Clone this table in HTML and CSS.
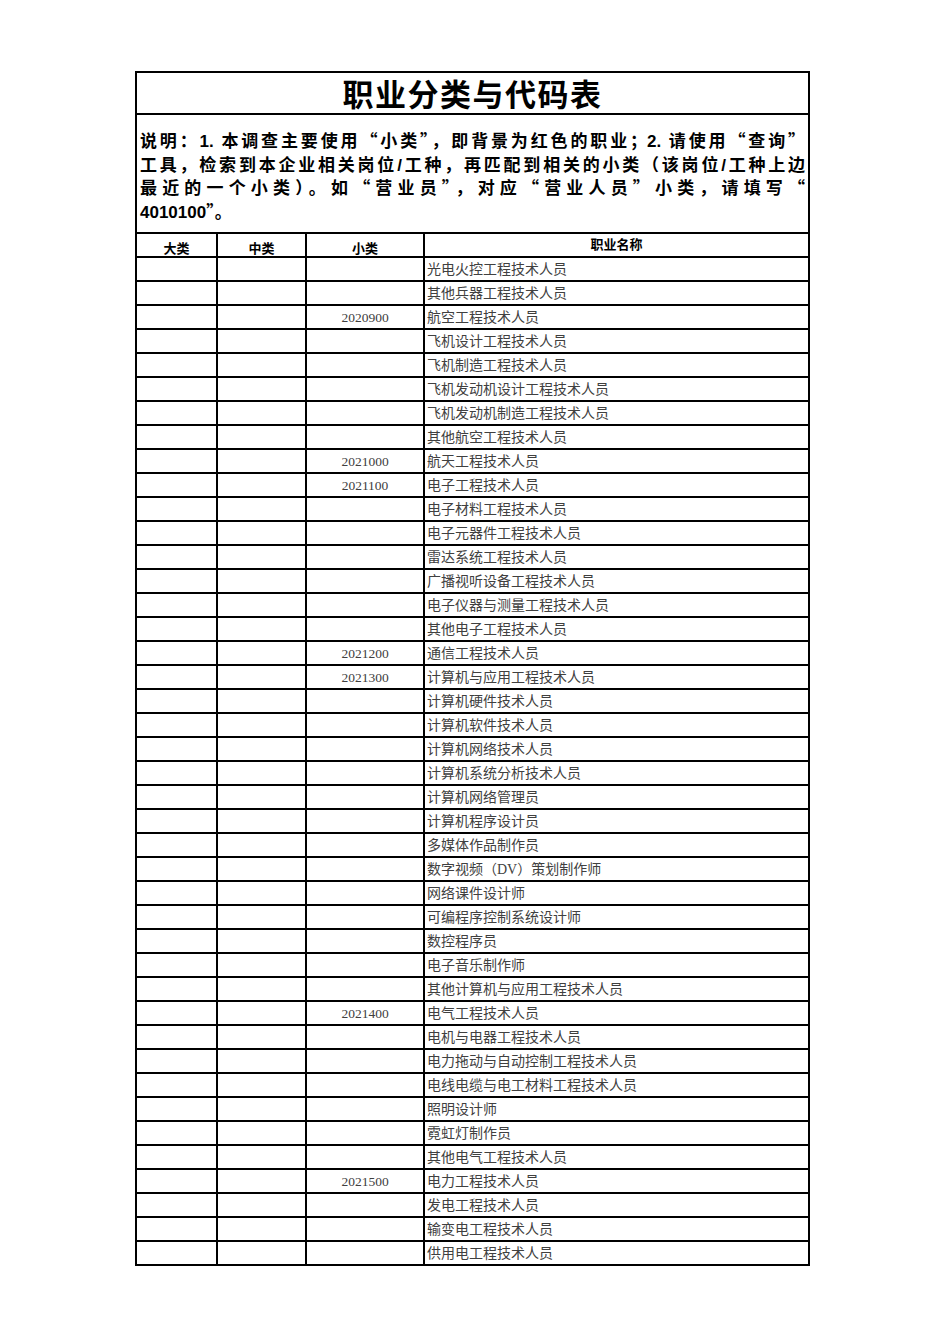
FILE: index.html
```html
<!DOCTYPE html>
<html lang="zh-CN">
<head>
<meta charset="utf-8">
<title>职业分类与代码表</title>
<link rel="stylesheet" href="styles.css">
</head>
<body>
<div class="sheet">
  <div class="title">职业分类与代码表</div>
  <div class="desc">
    <span class="ln jl">说明：<span class="num">1. </span>本调查主要使用“小类”，即背景为红色的职业；<span class="num">2. </span>请使用“查询”</span>
    <span class="ln jl">工具，检索到本企业相关岗位<span class="num">/</span>工种，再匹配到相关的小类（该岗位<span class="num">/</span>工种上边</span>
    <span class="ln jl">最近的一个小类）。如“营业员”，对应“营业人员”小类，请填写“</span>
    <span class="ln"><span class="num">4010100</span>”。</span>
  </div>
  <div class="hd">大类</div><div class="hd">中类</div><div class="hd">小类</div><div class="hd hd-top">职业名称</div>

  <div class="c"></div><div class="c"></div><div class="c code"></div><div class="c name">光电火控工程技术人员</div>
  <div class="c"></div><div class="c"></div><div class="c code"></div><div class="c name">其他兵器工程技术人员</div>
  <div class="c"></div><div class="c"></div><div class="c code">2020900</div><div class="c name">航空工程技术人员</div>
  <div class="c"></div><div class="c"></div><div class="c code"></div><div class="c name">飞机设计工程技术人员</div>
  <div class="c"></div><div class="c"></div><div class="c code"></div><div class="c name">飞机制造工程技术人员</div>
  <div class="c"></div><div class="c"></div><div class="c code"></div><div class="c name">飞机发动机设计工程技术人员</div>
  <div class="c"></div><div class="c"></div><div class="c code"></div><div class="c name">飞机发动机制造工程技术人员</div>
  <div class="c"></div><div class="c"></div><div class="c code"></div><div class="c name">其他航空工程技术人员</div>
  <div class="c"></div><div class="c"></div><div class="c code">2021000</div><div class="c name">航天工程技术人员</div>
  <div class="c"></div><div class="c"></div><div class="c code">2021100</div><div class="c name">电子工程技术人员</div>
  <div class="c"></div><div class="c"></div><div class="c code"></div><div class="c name">电子材料工程技术人员</div>
  <div class="c"></div><div class="c"></div><div class="c code"></div><div class="c name">电子元器件工程技术人员</div>
  <div class="c"></div><div class="c"></div><div class="c code"></div><div class="c name">雷达系统工程技术人员</div>
  <div class="c"></div><div class="c"></div><div class="c code"></div><div class="c name">广播视听设备工程技术人员</div>
  <div class="c"></div><div class="c"></div><div class="c code"></div><div class="c name">电子仪器与测量工程技术人员</div>
  <div class="c"></div><div class="c"></div><div class="c code"></div><div class="c name">其他电子工程技术人员</div>
  <div class="c"></div><div class="c"></div><div class="c code">2021200</div><div class="c name">通信工程技术人员</div>
  <div class="c"></div><div class="c"></div><div class="c code">2021300</div><div class="c name">计算机与应用工程技术人员</div>
  <div class="c"></div><div class="c"></div><div class="c code"></div><div class="c name">计算机硬件技术人员</div>
  <div class="c"></div><div class="c"></div><div class="c code"></div><div class="c name">计算机软件技术人员</div>
  <div class="c"></div><div class="c"></div><div class="c code"></div><div class="c name">计算机网络技术人员</div>
  <div class="c"></div><div class="c"></div><div class="c code"></div><div class="c name">计算机系统分析技术人员</div>
  <div class="c"></div><div class="c"></div><div class="c code"></div><div class="c name">计算机网络管理员</div>
  <div class="c"></div><div class="c"></div><div class="c code"></div><div class="c name">计算机程序设计员</div>
  <div class="c"></div><div class="c"></div><div class="c code"></div><div class="c name">多媒体作品制作员</div>
  <div class="c"></div><div class="c"></div><div class="c code"></div><div class="c name">数字视频（DV）策划制作师</div>
  <div class="c"></div><div class="c"></div><div class="c code"></div><div class="c name">网络课件设计师</div>
  <div class="c"></div><div class="c"></div><div class="c code"></div><div class="c name">可编程序控制系统设计师</div>
  <div class="c"></div><div class="c"></div><div class="c code"></div><div class="c name">数控程序员</div>
  <div class="c"></div><div class="c"></div><div class="c code"></div><div class="c name">电子音乐制作师</div>
  <div class="c"></div><div class="c"></div><div class="c code"></div><div class="c name">其他计算机与应用工程技术人员</div>
  <div class="c"></div><div class="c"></div><div class="c code">2021400</div><div class="c name">电气工程技术人员</div>
  <div class="c"></div><div class="c"></div><div class="c code"></div><div class="c name">电机与电器工程技术人员</div>
  <div class="c"></div><div class="c"></div><div class="c code"></div><div class="c name">电力拖动与自动控制工程技术人员</div>
  <div class="c"></div><div class="c"></div><div class="c code"></div><div class="c name">电线电缆与电工材料工程技术人员</div>
  <div class="c"></div><div class="c"></div><div class="c code"></div><div class="c name">照明设计师</div>
  <div class="c"></div><div class="c"></div><div class="c code"></div><div class="c name">霓虹灯制作员</div>
  <div class="c"></div><div class="c"></div><div class="c code"></div><div class="c name">其他电气工程技术人员</div>
  <div class="c"></div><div class="c"></div><div class="c code">2021500</div><div class="c name">电力工程技术人员</div>
  <div class="c"></div><div class="c"></div><div class="c code"></div><div class="c name">发电工程技术人员</div>
  <div class="c"></div><div class="c"></div><div class="c code"></div><div class="c name">输变电工程技术人员</div>
  <div class="c"></div><div class="c"></div><div class="c code"></div><div class="c name">供用电工程技术人员</div>
</div>
</body>
</html>
```
FILE: styles.css
```css
html, body {
  margin: 0;
  padding: 0;
  background: #fff;
}

body {
  font-family: "Noto Sans CJK SC", sans-serif;
}

.sheet {
  margin: 71px 0 0 135px;
  width: 671px;
  display: grid;
  grid-template-columns: 79px 87px 116px 383px;
  grid-template-rows: 40px 117px 22px repeat(42, 22px);
  gap: 2px;
  padding: 2px;
  background: #000;
}

.sheet > div {
  background: #fff;
  overflow: hidden;
}

.sheet > .title {
  grid-column: 1 / -1;
  display: flex;
  align-items: center;
  justify-content: center;
  overflow: visible;
  font-family: "Noto Sans CJK SC", sans-serif;
  font-weight: 700;
  font-size: 31px;
  line-height: 36px;
  letter-spacing: 1.5px;
  color: #000;
}

.desc {
  grid-column: 1 / -1;
  padding: 13px 3px 0 3px;
  font-family: "Noto Sans CJK SC", sans-serif;
  font-weight: 700;
  font-size: 17px;
  line-height: 24px;
  color: #000;
}

.num {
  font-family: "Liberation Sans", sans-serif;
  line-height: 1;
}

.ln {
  display: block;
  height: 23.7px;
  white-space: nowrap;
}

.jl {
  text-align: justify;
  text-align-last: justify;
}

.hd {
  display: flex;
  align-items: flex-end;
  justify-content: center;
  font-family: "Noto Sans CJK SC", sans-serif;
  font-weight: 700;
  font-size: 13px;
  line-height: 17px;
  color: #000;
}

.hd-top {
  align-items: flex-start;
  padding-top: 1px;
}

.c {
  font-size: 14px;
  line-height: 22px;
  color: #404040;
}

.code {
  padding-top: 1px;
  text-align: center;
  font-family: "Liberation Serif", serif;
  font-size: 13.5px;
}

.name {
  padding: 1px 0 0 2px;
  font-family: "Liberation Serif", "Noto Sans CJK SC", serif;
  font-size: 14px;
  white-space: nowrap;
}
```
